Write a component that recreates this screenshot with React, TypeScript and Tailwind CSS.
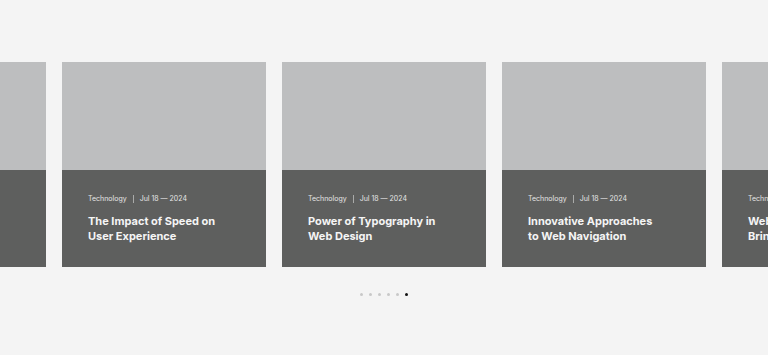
const posts = [
  { category: "Technology", date: "Jul 18 — 2024", title: "Designing for Every Screen Size" },
  { category: "Technology", date: "Jul 18 — 2024", title: "The Impact of Speed on User Experience" },
  { category: "Technology", date: "Jul 18 — 2024", title: "Power of Typography in Web Design" },
  { category: "Technology", date: "Jul 18 — 2024", title: "Innovative Approaches to Web Navigation" },
  { category: "Technology", date: "Jul 18 — 2024", title: "Web Design Trends Bringing Change" },
];

function PostCard({ category, date, title }: { category: string; date: string; title: string }) {
  return (
    <div className="w-[204px] shrink-0 flex flex-col">
      <div className="h-[108px] bg-[#bdbebf]" />
      <div className="h-[97px] bg-[#5e5f5e] px-[26px] pt-[24px]">
        <div className="flex items-center text-[7px] leading-[10px] text-[#e6e6e6]">
          <span>{category}</span>
          <span className="mx-[6px] h-[8px] w-px bg-[#a9aaa9]" />
          <span>{date}</span>
        </div>
        <h3 className="mt-[10px] w-[136px] text-[11px] leading-[15px] font-bold text-[#f5f5f5]">
          {title}
        </h3>
      </div>
    </div>
  );
}

export default function App() {
  const active = 5;
  return (
    <div
      className="w-full h-[355px] bg-[#f4f4f4] overflow-hidden pt-[62px]"
      style={{ fontFamily: "Inter, 'Noto Sans', sans-serif" }}
    >
      {/* Track */}
      <div className="flex gap-[16px] -ml-[158px]">
        {posts.map((p, i) => (
          <PostCard key={i} {...p} />
        ))}
      </div>

      {/* Dots */}
      <div className="mt-[26px] flex justify-center items-center gap-[6px]">
        {[0, 1, 2, 3, 4, 5].map((d) => (
          <span
            key={d}
            className={
              d === active
                ? "w-[3px] h-[3px] rounded-full bg-[#111111]"
                : "w-[3px] h-[3px] rounded-full bg-[#c8c8c8]"
            }
          />
        ))}
      </div>
    </div>
  );
}
